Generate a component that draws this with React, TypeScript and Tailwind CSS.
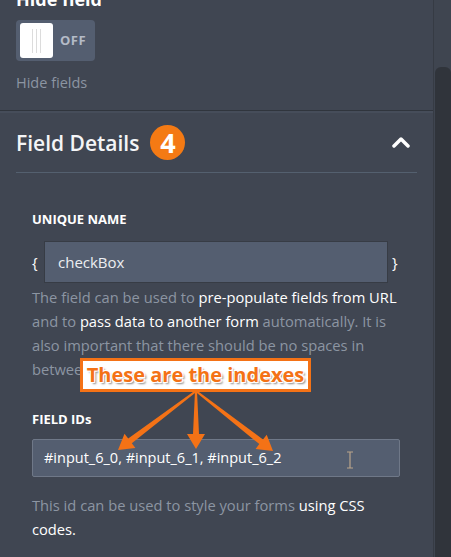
import React from "react";

const font = { fontFamily: '"Open Sans", "Noto Sans", sans-serif' } as React.CSSProperties;

function Arrow({ x1, y1, x2, y2 }: { x1: number; y1: number; x2: number; y2: number }) {
  const dx = x2 - x1;
  const dy = y2 - y1;
  const len = Math.sqrt(dx * dx + dy * dy);
  const ux = dx / len;
  const uy = dy / len;
  const px = -uy;
  const py = ux;
  const head = 15;
  const hw = 9;
  const bx = x2 - ux * head;
  const by = y2 - uy * head;
  const sw0 = 1;
  const sw1 = 3;
  const pts = [
    [x1 + px * sw0, y1 + py * sw0],
    [bx + px * sw1, by + py * sw1],
    [bx + px * hw, by + py * hw],
    [x2, y2],
    [bx - px * hw, by - py * hw],
    [bx - px * sw1, by - py * sw1],
    [x1 - px * sw0, y1 - py * sw0],
  ]
    .map((p) => p.map((v) => v.toFixed(1)).join(","))
    .join(" ");
  return <polygon points={pts} fill="#f47216" />;
}

export default function App() {
  return (
    <div className="relative flex h-[557px] w-[451px] overflow-hidden bg-[#404652]" style={font}>
      <div className="w-[433px] shrink-0">
        {/* Hide field section */}
        <div className="px-4 pb-[17px]">
          <div className="-mt-[11px] text-[18px] font-bold leading-[20px] text-white">Hide field</div>
          <div className="mt-[11px] flex h-[41px] w-[79px] items-center rounded-[4px] bg-[#545e70] pl-[4px]">
            <div className="flex h-[35px] w-[33px] items-center justify-center gap-[3px] rounded-[3px] bg-white">
              <span className="h-[24px] w-[1px] bg-[#dcdcdc]" />
              <span className="h-[24px] w-[1px] bg-[#dcdcdc]" />
              <span className="h-[24px] w-[1px] bg-[#dcdcdc]" />
            </div>
            <span className="ml-[7px] text-[13px] font-bold tracking-[0.5px] text-[#b4bbc7]">OFF</span>
          </div>
          <div className="mt-[12px] text-[14.5px] leading-[20px] text-[#8c95a2]">Hide fields</div>
        </div>
        <div className="h-[1px] bg-[#30353d]" />
        <div className="h-[2px] bg-[#464d5a]" />

        {/* Field details */}
        <div className="px-4">
          <div className="flex h-[60px] items-center justify-between border-b border-[#54606f]">
            <div className="flex items-center gap-[11px]">
              <span className="text-[21px] font-semibold leading-[28px] text-[#f4f5f7]">Field Details</span>
              <span className="flex h-[35px] w-[35px] items-center justify-center rounded-full bg-[#f47a14] text-[27px] font-bold leading-none text-white">4</span>
            </div>
            <svg width="18" height="12" viewBox="0 0 18 12" className="mr-[7px] mt-[-2px]">
              <path d="M2 10 L9 3 L16 10" stroke="white" strokeWidth="3.5" fill="none" strokeLinecap="round" strokeLinejoin="round" />
            </svg>
          </div>

          <div className="px-4 pt-[37px]">
            <div className="text-[13px] font-bold leading-[18px] text-white">UNIQUE NAME</div>
            <div className="mt-[13px] flex items-center">
              <span className="w-[12px] text-[15px] text-white">{"{"}</span>
              <div className="flex h-[42px] w-[344px] items-center border border-[#373c45] bg-[#545e70] px-[13px] text-[15px] text-[#eceef1]">
                checkBox
              </div>
              <span className="ml-[4px] text-[15px] text-white">{"}"}</span>
            </div>
            <p className="mt-[2px] text-[14.7px] leading-[24px] text-[#8c95a2]">
              The field can be used to <span className="font-medium text-white">pre-populate fields from URL</span> and to{" "}
              <span className="font-medium text-white">pass data to another form</span> automatically. It is also important
              that there should be no spaces in between words.
            </p>
            <div className="mt-[29px] text-[13px] font-bold leading-[18px] text-white">FIELD IDs</div>
            <div className="mt-[11px] flex h-[38px] w-[368px] items-center rounded-[2px] border border-[#6f7888] bg-[#545e70] px-[11px] text-[14.5px] text-white">
              #input_6_0, #input_6_1, #input_6_2
            </div>
            <p className="mt-[16px] text-[14.7px] leading-[24px] text-[#8c95a2]">
              This id can be used to style your forms <span className="font-medium text-white">using CSS codes.</span>
            </p>
          </div>
        </div>
      </div>

      {/* scrollbar */}
      <div className="relative w-[18px] border-l border-[#363b44] bg-[#3f4550]">
        <div className="absolute left-[1px] right-0 top-[67px] bottom-0 rounded-t-[6px] bg-[#30343b]" />
      </div>

      {/* text cursor */}
      <svg className="absolute left-[345px] top-[451px]" width="10" height="18" viewBox="0 0 10 18">
        <path d="M2 1 H8 M5 1 V17 M2 17 H8" stroke="#b9a48a" strokeWidth="1.2" fill="none" />
      </svg>

      {/* arrows */}
      <svg className="absolute left-0 top-0" width="451" height="557">
        <Arrow x1={196} y1={391} x2={118} y2={450} />
        <Arrow x1={196} y1={391} x2={196} y2={449} />
        <Arrow x1={196} y1={391} x2={273} y2={451} />
      </svg>

      {/* annotation */}
      <div className="absolute left-[80px] top-[358px] flex h-[34px] w-[231px] items-center justify-center border-[3px] border-[#f47216] bg-white">
        <span
          className="text-[20px] font-bold leading-none text-[#f47216]"
          style={{ textShadow: "1px 1px 0 #fff, -1px -1px 0 #fff, 1px -1px 0 #fff, -1px 1px 0 #fff, 2px 2px 2px #888" }}
        >
          These are the indexes
        </span>
      </div>
    </div>
  );
}
